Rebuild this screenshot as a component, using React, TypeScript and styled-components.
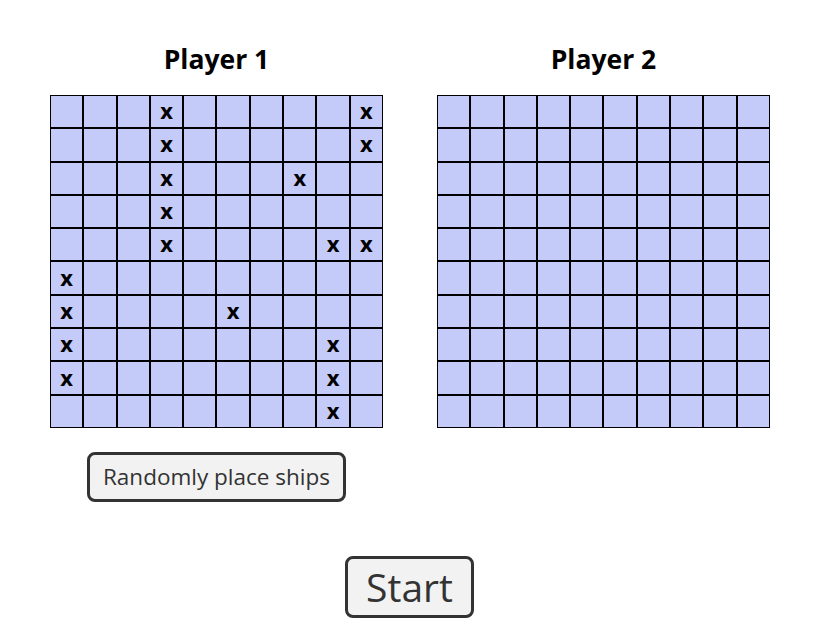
import React from "react";
import styled, { createGlobalStyle } from "styled-components";

const GlobalStyle = createGlobalStyle`
  html, body { margin: 0; padding: 0; background: #ffffff; }
  body { font-family: "Open Sans", "Noto Sans", sans-serif; }
`;

const Page = styled.div`
  display: flex;
  flex-direction: column;
  align-items: center;
  padding-top: 41px;
`;

const Boards = styled.div`
  display: flex;
  gap: 54px;
  align-items: flex-start;
  margin-left: 1px;
`;

const Panel = styled.section`
  display: flex;
  flex-direction: column;
  align-items: center;
  width: 333px;
`;

const Title = styled.h2`
  margin: 0 0 18px;
  font-size: 26.5px;
  font-weight: 700;
  line-height: 36px;
  color: #000;
`;

const Grid = styled.div`
  display: grid;
  grid-template-columns: repeat(10, 1fr);
  grid-template-rows: repeat(10, 1fr);
  width: 333px;
  height: 333px;
`;

const Cell = styled.div`
  box-sizing: border-box;
  border: 1px solid #000;
  background: #c5cbf8;
  display: flex;
  align-items: center;
  justify-content: center;
  font-size: 22px;
  font-weight: 700;
  line-height: 1;
  color: #000;
  padding-bottom: 3px;
`;

const Button = styled.button<{ $big?: boolean }>`
  font-family: "Open Sans", "Noto Sans", sans-serif;
  font-size: ${(p) => (p.$big ? "39px" : "22.5px")};
  line-height: ${(p) => (p.$big ? "53px" : "30px")};
  padding: ${(p) => (p.$big ? "1.5px 18.5px 2px" : "6.5px 13px 7px")};
  color: #333;
  background: #f2f2f2;
  border: 3px solid #333;
  border-radius: 8px;
  cursor: pointer;
`;

const RandomButton = styled(Button)`
  margin-top: 24px;
`;

const StartButton = styled(Button)`
  margin-top: 54px;
`;

const ships: string[] = [
  "...x.....x",
  "...x.....x",
  "...x...x..",
  "...x......",
  "...x....xx",
  "x.........",
  "x....x....",
  "x.......x.",
  "x.......x.",
  "........x.",
];

const Board: React.FC<{ rows?: string[] }> = ({ rows }) => (
  <Grid>
    {Array.from({ length: 100 }, (_, i) => {
      const r = Math.floor(i / 10);
      const c = i % 10;
      const mark = rows && rows[r][c] === "x" ? "x" : "";
      return <Cell key={i}>{mark}</Cell>;
    })}
  </Grid>
);

export default function App() {
  return (
    <>
      <GlobalStyle />
      <Page>
        <Boards>
          <Panel>
            <Title>Player 1</Title>
            <Board rows={ships} />
            <RandomButton>Randomly place ships</RandomButton>
          </Panel>
          <Panel>
            <Title>Player 2</Title>
            <Board />
          </Panel>
        </Boards>
        <StartButton $big>Start</StartButton>
      </Page>
    </>
  );
}
